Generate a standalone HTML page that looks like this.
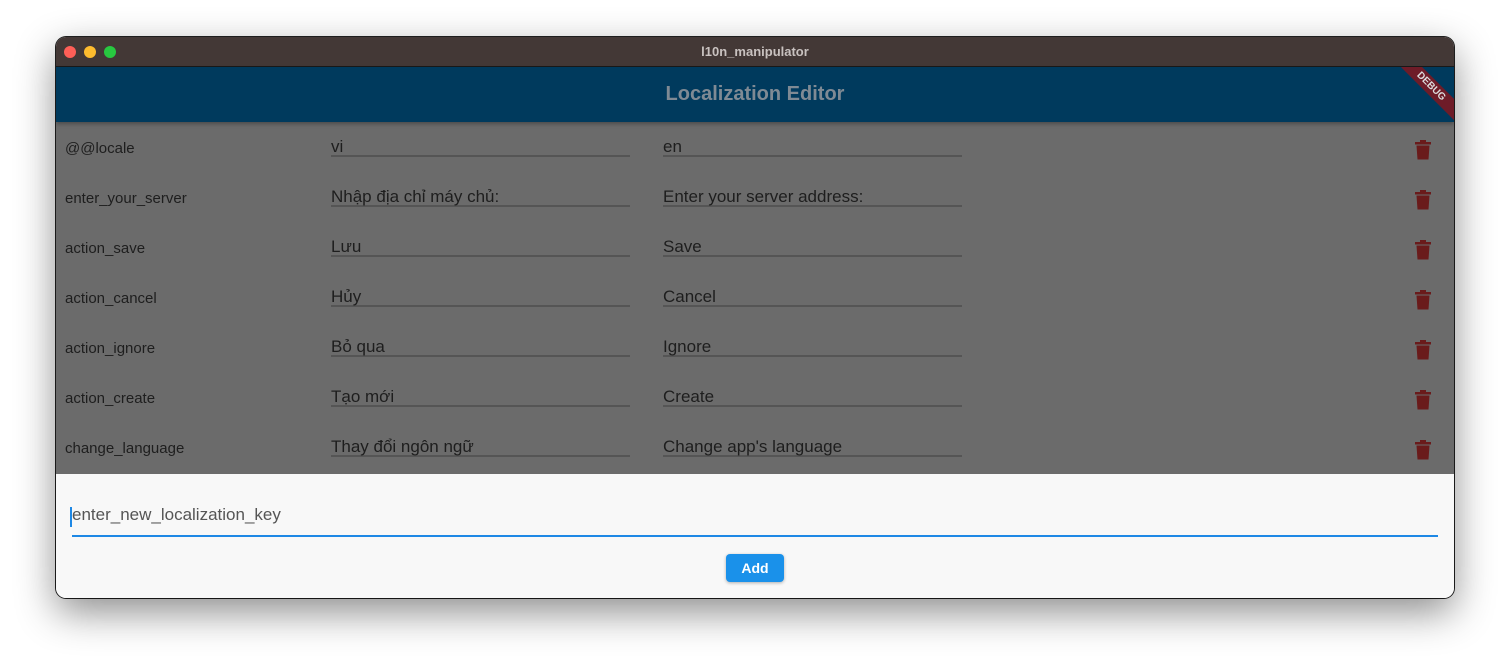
<!DOCTYPE html>
<html><head><meta charset="utf-8"><style>
body{margin:0;width:1510px;height:672px;background:#fff;font-family:"Liberation Sans","DejaVu Sans",sans-serif;position:relative;overflow:hidden}
.win{position:absolute;left:56px;top:37px;width:1398px;height:561px;border-radius:10px;overflow:hidden;box-shadow:0 14px 40px rgba(0,0,0,.45),0 0 0 1px #222}
.tb{height:29px;background:#433836;border-bottom:1px solid #1a1a1a;position:relative;color:#c9c2c0;font-size:13px;font-weight:bold;text-align:center;line-height:29px}
.dot{position:absolute;top:9px;width:12px;height:12px;border-radius:50%}
.ab{height:55px;background:#003a5d;color:#7f8a94;font-size:20px;font-weight:bold;text-align:center;line-height:55px;position:relative;overflow:hidden;box-shadow:0 2px 4px rgba(0,0,0,.3);z-index:2}
.rib{position:absolute;right:-32px;top:12px;width:110px;height:15px;background:#6e1c28;transform:rotate(45deg);color:#ddd;font-size:10px;line-height:15px;text-align:center;font-weight:bold}
.list{background:#6b6b6b;height:352px;position:relative}
.row{position:absolute;left:0;width:100%;height:50px}
.k{position:absolute;left:9px;top:18px;font-size:15px;color:#1e1e1e}
.v{position:absolute;top:12px;width:299px;height:21px;border-bottom:2px solid #555;font-size:17px;color:#1e1e1e;line-height:26px}
.t{position:absolute;left:1359px;top:18px}
.t *{fill:#6a1b1b}
.bot{background:#f8f8f8;height:124px;position:relative}
.inp{position:absolute;left:16px;top:30px;width:1366px;height:30px;padding-top:1px;border-bottom:2px solid #1e88e5;font-size:17px;color:#555;line-height:20px}
.cur{position:absolute;left:-2px;top:3px;width:2px;height:20px;background:#1e88e5}
.btn{position:absolute;left:670px;top:80px;width:58px;height:28px;background:#1a91ea;border-radius:4px;color:#fff;font-weight:bold;font-size:14px;text-align:center;line-height:28px;box-shadow:0 1px 3px rgba(0,0,0,.3)}
</style></head><body>
<div class="win">
<div class="tb"><span class="dot" style="left:8px;background:#fe5f57"></span><span class="dot" style="left:28px;background:#febc2e"></span><span class="dot" style="left:48px;background:#28c840"></span>l10n_manipulator</div>
<div class="ab">Localization Editor<div class="rib">DEBUG</div></div>
<div class="list">
<div class="row" style="top:0"><span class="k">@@locale</span><div class="v" style="left:275px">vi</div><div class="v" style="left:607px">en</div><svg class="t" width="16" height="20" viewBox="0 0 16 20"><rect x="0" y="2" width="16" height="2.5"/><rect x="5" y="0" width="6" height="3"/><path d="M1.5 5.5h13l-1 14h-11z"/></svg></div>
<div class="row" style="top:50px"><span class="k">enter_your_server</span><div class="v" style="left:275px">Nhập địa chỉ máy chủ:</div><div class="v" style="left:607px">Enter your server address:</div><svg class="t" width="16" height="20" viewBox="0 0 16 20"><rect x="0" y="2" width="16" height="2.5"/><rect x="5" y="0" width="6" height="3"/><path d="M1.5 5.5h13l-1 14h-11z"/></svg></div>
<div class="row" style="top:100px"><span class="k">action_save</span><div class="v" style="left:275px">Lưu</div><div class="v" style="left:607px">Save</div><svg class="t" width="16" height="20" viewBox="0 0 16 20"><rect x="0" y="2" width="16" height="2.5"/><rect x="5" y="0" width="6" height="3"/><path d="M1.5 5.5h13l-1 14h-11z"/></svg></div>
<div class="row" style="top:150px"><span class="k">action_cancel</span><div class="v" style="left:275px">Hủy</div><div class="v" style="left:607px">Cancel</div><svg class="t" width="16" height="20" viewBox="0 0 16 20"><rect x="0" y="2" width="16" height="2.5"/><rect x="5" y="0" width="6" height="3"/><path d="M1.5 5.5h13l-1 14h-11z"/></svg></div>
<div class="row" style="top:200px"><span class="k">action_ignore</span><div class="v" style="left:275px">Bỏ qua</div><div class="v" style="left:607px">Ignore</div><svg class="t" width="16" height="20" viewBox="0 0 16 20"><rect x="0" y="2" width="16" height="2.5"/><rect x="5" y="0" width="6" height="3"/><path d="M1.5 5.5h13l-1 14h-11z"/></svg></div>
<div class="row" style="top:250px"><span class="k">action_create</span><div class="v" style="left:275px">Tạo mới</div><div class="v" style="left:607px">Create</div><svg class="t" width="16" height="20" viewBox="0 0 16 20"><rect x="0" y="2" width="16" height="2.5"/><rect x="5" y="0" width="6" height="3"/><path d="M1.5 5.5h13l-1 14h-11z"/></svg></div>
<div class="row" style="top:300px"><span class="k">change_language</span><div class="v" style="left:275px">Thay đổi ngôn ngữ</div><div class="v" style="left:607px">Change app's language</div><svg class="t" width="16" height="20" viewBox="0 0 16 20"><rect x="0" y="2" width="16" height="2.5"/><rect x="5" y="0" width="6" height="3"/><path d="M1.5 5.5h13l-1 14h-11z"/></svg></div>
</div>
<div class="bot"><div class="inp"><span class="cur"></span>enter_new_localization_key</div><div class="btn">Add</div></div>
</div>
</body></html>
